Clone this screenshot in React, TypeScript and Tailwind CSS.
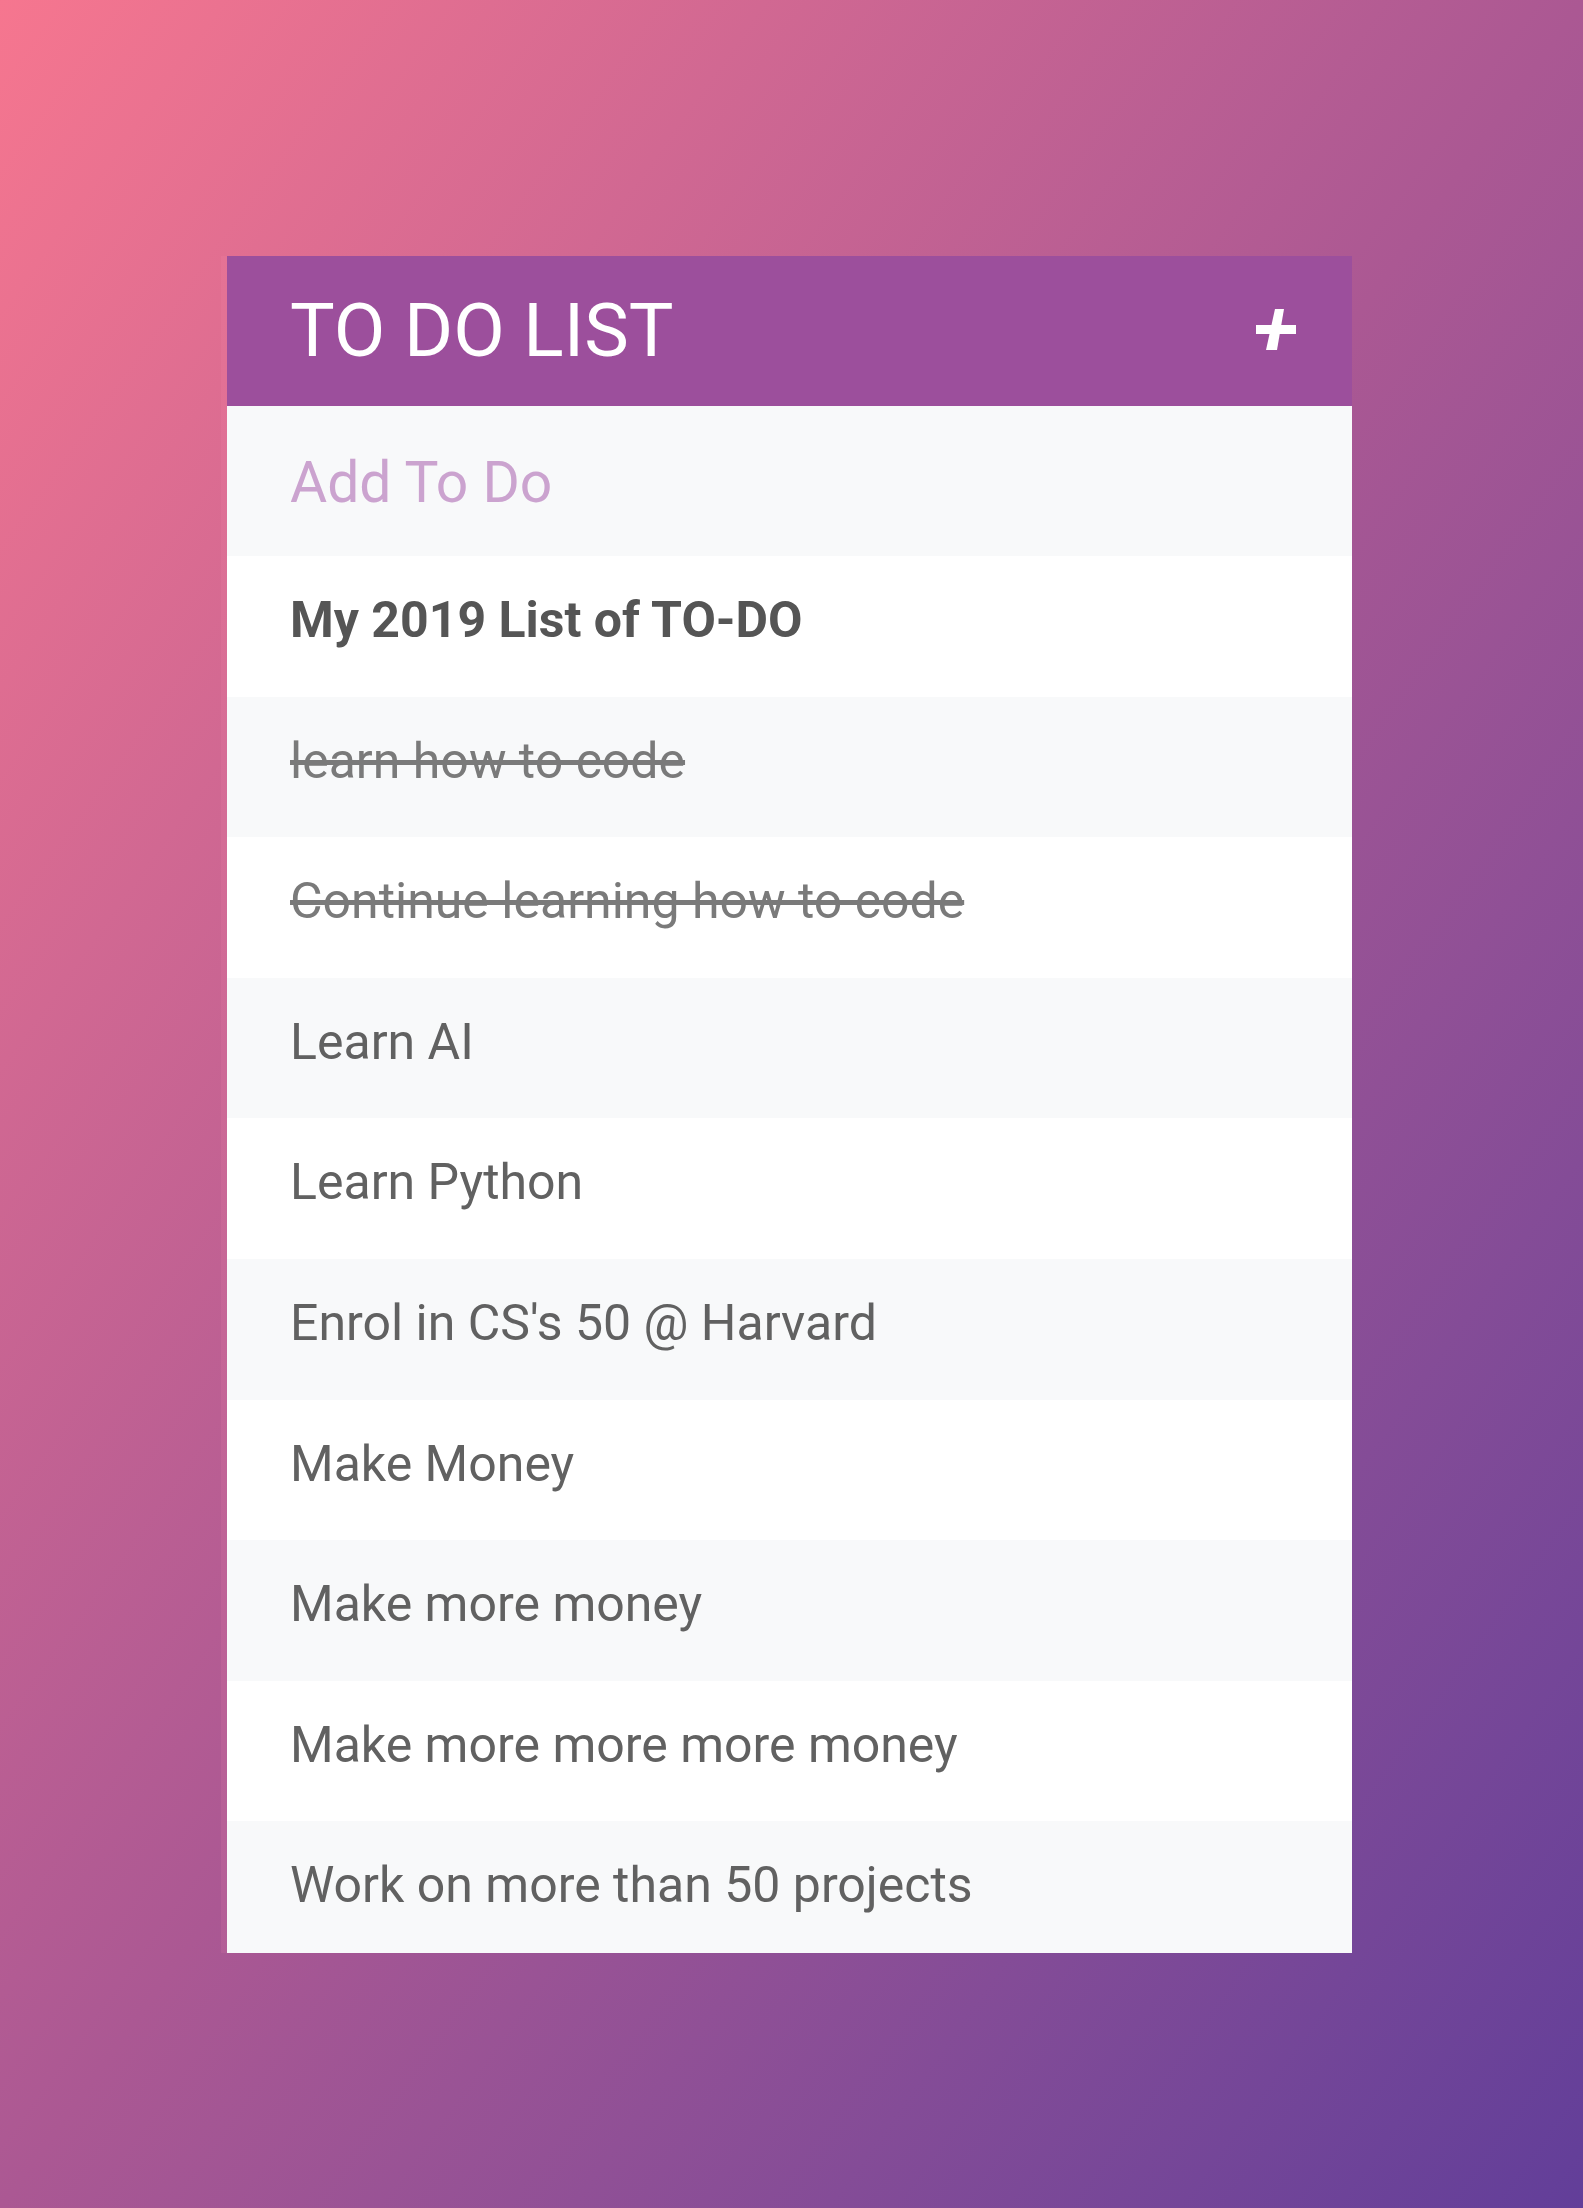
import React from "react";

type Todo = {
    id: number;
    text: string;
    done?: boolean;
    bold?: boolean;
};

const todos: Todo[] = [
    { id: 1, text: "My 2019 List of TO-DO", bold: true },
    { id: 2, text: "learn how to code", done: true },
    { id: 3, text: "Continue learning how to code", done: true },
    { id: 4, text: "Learn AI" },
    { id: 5, text: "Learn Python" },
    { id: 6, text: "Enrol in CS's 50 @ Harvard" },
    { id: 7, text: "Make Money" },
    { id: 8, text: "Make more money" },
    { id: 9, text: "Make more more more money" },
    { id: 10, text: "Work on more than 50 projects" },
];

const PlusIcon = () => (
    <svg viewBox="0 0 40 43" className="w-[40px] h-[43px]" fill="white">
        <rect x="0" y="17" width="40" height="9" />
        <polygon points="19,1 28,1 21,42 10,42" />
    </svg>
);

const App = () => {
    return (
        <div className="min-h-[2208px] w-full bg-gradient-to-br from-[#f6768f] via-[#ab5893] to-[#623e99] pt-[256px] pl-[227px] font-['Roboto','Liberation_Sans',sans-serif]">
            <div className="w-[1125px] h-[1697px] overflow-hidden flex flex-col shadow-[-6px_0_0_rgba(255,150,180,0.12)]">
                {/* header */}
                <div className="h-[150px] shrink-0 bg-[#9c4f9c] flex items-start justify-between pl-[63px] pr-[56px]">
                    <h1 className="pt-[30px] text-[75px] leading-[88px] text-white font-normal">
                        TO DO LIST
                    </h1>
                    <div className="pt-[52px]">
                        <PlusIcon />
                    </div>
                </div>

                {/* input */}
                <div className="h-[150px] shrink-0 bg-[#f8f9fa] pl-[63px] pt-[43px]">
                    <input
                        type="text"
                        placeholder="Add To Do"
                        className="w-full bg-transparent outline-none text-[57px] leading-[67px] text-[#555] placeholder:text-[#cba3cf]"
                    />
                </div>

                {/* list */}
                <ul className="flex flex-col">
                    {todos.map((todo, i) => (
                        <li
                            key={todo.id}
                            className={
                                "h-[140.6px] shrink-0 pl-[63px] pt-[35px] text-[50px] leading-[58px] " +
                                (i % 2 === 0 ? "bg-white " : "bg-[#f8f9fa] ") +
                                (todo.done
                                    ? "line-through text-[#7a7a7a]"
                                    : todo.bold
                                    ? "font-bold text-[#555555]"
                                    : "text-[#616161]")
                            }
                        >
                            {todo.text}
                        </li>
                    ))}
                </ul>
            </div>
        </div>
    );
};

export default App;
